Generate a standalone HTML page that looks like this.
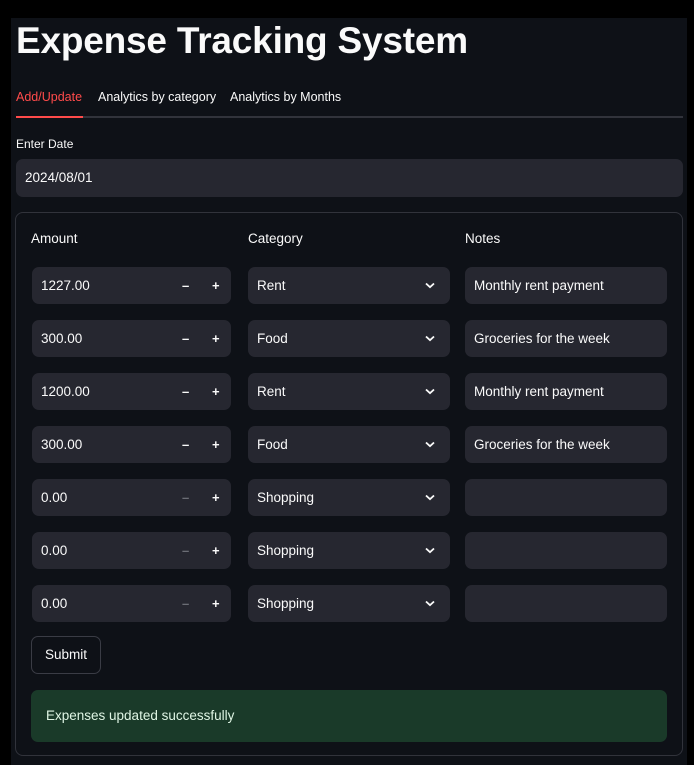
<!DOCTYPE html>
<html><head><style>
*{box-sizing:border-box;margin:0;padding:0}
body{width:694px;height:765px;background:#000;font-family:"Liberation Sans",sans-serif;color:#fafafa;position:relative;overflow:hidden}
.page{position:absolute;left:11px;top:18px;width:676px;height:747px;background:#0e1117}
.abs{position:absolute}
h1{position:absolute;left:5px;top:1px;font-size:37px;font-weight:bold;letter-spacing:-0.2px;line-height:44px}
.tab{position:absolute;top:72px;font-size:12.5px}
.line{position:absolute;left:5px;top:98px;width:667px;height:2px;background:#31333b}
.inp{position:absolute;background:#262730;border-radius:7px;height:37px;font-size:13.5px;line-height:37px;padding-left:9px}
.lbl{position:absolute;font-size:13.5px}
.btn{position:absolute;font-size:13px;font-weight:bold}
</style></head><body>
<div class="page">
<h1>Expense Tracking System</h1>
<div class="tab" style="left:5px;color:#ff4b4b">Add/Update</div>
<div class="tab" style="left:87px">Analytics by category</div>
<div class="tab" style="left:219px">Analytics by Months</div>
<div class="line"></div>
<div class="abs" style="left:5px;top:98px;width:67px;height:2px;background:#ff4b4b"></div>
<div class="lbl" style="left:5px;top:119px;font-size:12px">Enter Date</div>
<div class="inp" style="left:5px;top:141px;width:667px;height:38px;line-height:38px">2024/08/01</div>
<div class="abs" style="left:4px;top:194px;width:668px;height:544px;border:1px solid #31333b;border-radius:8px"></div>
<div class="lbl" style="left:20px;top:213px">Amount</div>
<div class="lbl" style="left:237px;top:213px">Category</div>
<div class="lbl" style="left:454px;top:213px">Notes</div>
<div id="rows"></div>
<div class="abs" style="left:20px;top:618px;width:70px;height:38px;border:1px solid #3a3c45;border-radius:7px;font-size:13.5px;line-height:36px;text-align:center">Submit</div>
<div class="abs" style="left:20px;top:672px;width:636px;height:52px;background:#1a3a29;border-radius:7px;font-size:13.5px;line-height:52px;padding-left:15px;color:#dff5e4">Expenses updated successfully</div>
</div>
<script>
var d=[["1227.00","Rent","Monthly rent payment",1],["300.00","Food","Groceries for the week",1],["1200.00","Rent","Monthly rent payment",1],["300.00","Food","Groceries for the week",1],["0.00","Shopping","",0],["0.00","Shopping","",0],["0.00","Shopping","",0]];
var h="";
d.forEach(function(r,i){var t=249+i*53;
h+='<div class="inp" style="left:21px;top:'+t+'px;width:199px">'+r[0]+'<span class="btn" style="left:150px;top:0;color:'+(r[3]?'#fafafa':'#6b6d75')+'">&#8211;</span><span class="btn" style="left:180px;top:0">+</span></div>';
h+='<div class="inp" style="left:237px;top:'+t+'px;width:202px">'+r[1]+'<svg class="abs" style="left:177px;top:15px" width="10" height="7" viewBox="0 0 10 7"><path d="M1 1.5L5 5.2L9 1.5" stroke="#fafafa" stroke-width="1.8" fill="none"/></svg></div>';
h+='<div class="inp" style="left:454px;top:'+t+'px;width:202px">'+r[2]+'</div>';});
document.getElementById("rows").outerHTML=h;
</script>
</body></html>
